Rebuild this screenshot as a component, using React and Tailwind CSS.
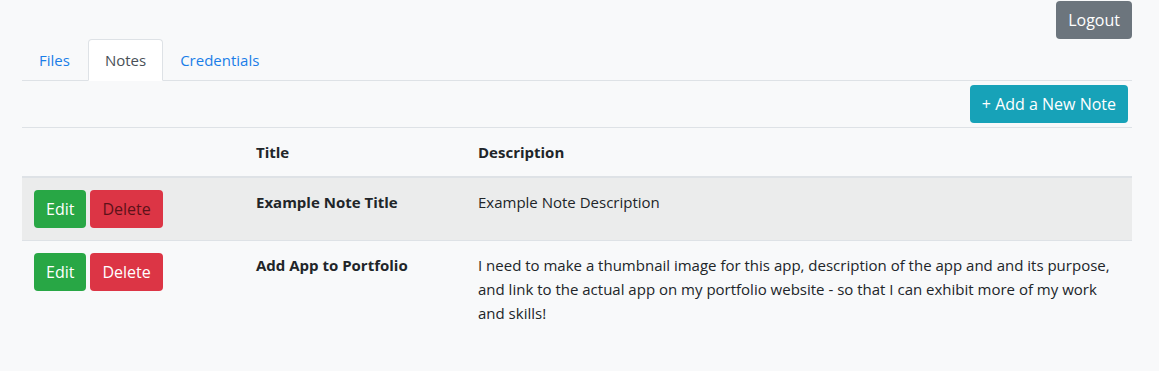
import React from "react";

const font = { fontFamily: "'Open Sans', 'Noto Sans', sans-serif" };

function Btn({ className, children }) {
  return (
    <button
      className={`h-[38px] px-3 rounded-[4px] text-base leading-6 ${className}`}
    >
      {children}
    </button>
  );
}

function Row({ title, desc, striped, hover }) {
  return (
    <tr className={`border-t border-[#dee2e6] ${striped ? "bg-[#ebecec]" : ""}`}>
      <td className="p-3 align-top">
        <div className="flex gap-1">
          <Btn className="bg-[#28a745] text-white">Edit</Btn>
          <Btn className={`bg-[#dc3545] ${hover ? "text-[#5c1219]" : "text-white"}`}>Delete</Btn>
        </div>
      </td>
      <td className="p-3 align-top font-bold text-[#212529]">{title}</td>
      <td className="p-3 align-top text-[#212529]">{desc}</td>
    </tr>
  );
}

export default function App() {
  return (
    <div className="min-h-[371px] bg-[#f8f9fa] text-[15px] leading-6" style={font}>
      <div className="ml-[22px] w-[1110px]">
        <div className="flex justify-end pt-px">
          <Btn className="bg-[#6c757d] text-white">Logout</Btn>
        </div>
        <div className="flex border-b border-[#dee2e6]">
          <div className="px-4 py-2 border border-transparent text-[#1a7ee8] -mb-px">Files</div>
          <div className="ml-px px-4 py-2 border border-[#dee2e6] border-b-white bg-white rounded-t-[4px] text-[#495057] -mb-px">Notes</div>
          <div className="px-4 py-2 border border-transparent text-[#1a7ee8] -mb-px">Credentials</div>
        </div>
        <div className="flex justify-end mt-1 mb-1 mr-1">
          <Btn className="bg-[#17a2b8] text-white">+ Add a New Note</Btn>
        </div>
        <table className="w-full border-collapse text-left">
          <colgroup>
            <col className="w-[222px]" />
            <col className="w-[222px]" />
            <col />
          </colgroup>
          <thead>
            <tr className="border-t border-[#dee2e6] border-b-2">
              <th className="p-3 font-bold"></th>
              <th className="p-3 font-bold text-[#212529]">Title</th>
              <th className="p-3 font-bold text-[#212529]">Description</th>
            </tr>
          </thead>
          <tbody>
            <Row
              title="Example Note Title"
              desc="Example Note Description"
              striped
              hover
            />
            <Row
              title="Add App to Portfolio"
              desc="I need to make a thumbnail image for this app, description of the app and and its purpose, and link to the actual app on my portfolio website - so that I can exhibit more of my work and skills!"
            />
          </tbody>
        </table>
      </div>
    </div>
  );
}
